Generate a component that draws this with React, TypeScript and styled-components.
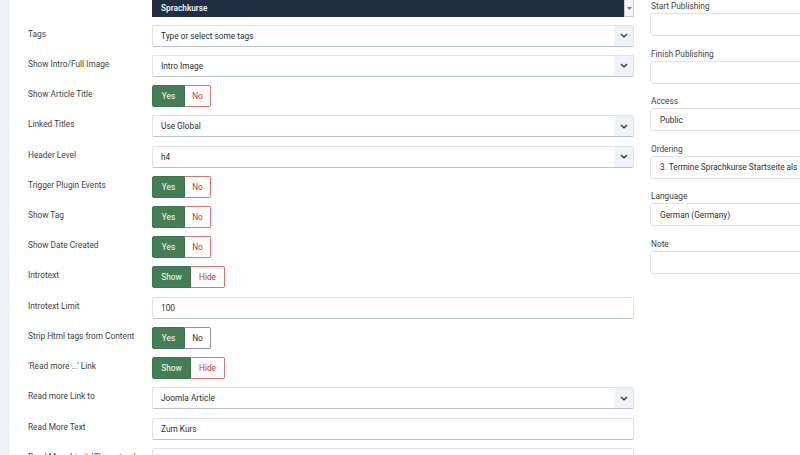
import React from 'react';
import styled, { createGlobalStyle } from 'styled-components';

const GlobalStyle = createGlobalStyle`
  html, body {
    margin: 0;
    padding: 0;
    background: #fff;
    overflow: hidden;
  }
  body {
    font-family: Roboto, "Liberation Sans", sans-serif;
    font-size: 8.3px;
    color: #3a3f45;
  }
`;

type Field =
  | { kind: 'select'; label: string; value: string }
  | { kind: 'input'; label: string; value: string }
  | { kind: 'toggle'; label: string; on: string; off: string; neutral?: boolean };

const fields: Field[] = [
  { kind: 'select', label: 'Tags', value: 'Type or select some tags' },
  { kind: 'select', label: 'Show Intro/Full Image', value: 'Intro Image' },
  { kind: 'toggle', label: 'Show Article Title', on: 'Yes', off: 'No' },
  { kind: 'select', label: 'Linked Titles', value: 'Use Global' },
  { kind: 'select', label: 'Header Level', value: 'h4' },
  { kind: 'toggle', label: 'Trigger Plugin Events', on: 'Yes', off: 'No' },
  { kind: 'toggle', label: 'Show Tag', on: 'Yes', off: 'No' },
  { kind: 'toggle', label: 'Show Date Created', on: 'Yes', off: 'No' },
  { kind: 'toggle', label: 'Introtext', on: 'Show', off: 'Hide' },
  { kind: 'input', label: 'Introtext Limit', value: '100' },
  { kind: 'toggle', label: 'Strip Html tags from Content', on: 'Yes', off: 'No', neutral: true },
  { kind: 'toggle', label: "'Read more ...' Link", on: 'Show', off: 'Hide' },
  { kind: 'select', label: 'Read more Link to', value: 'Joomla Article' },
  { kind: 'input', label: 'Read More Text', value: 'Zum Kurs' },
  { kind: 'input', label: 'Read More Limit (Characters)', value: '' },
];

const sideFields = [
  { label: 'Start Publishing', value: '' },
  { label: 'Finish Publishing', value: '' },
  { label: 'Access', value: 'Public' },
  { label: 'Ordering', value: '3. Termine Sprachkurse Startseite als Kacheln' },
  { label: 'Language', value: 'German (Germany)' },
  { label: 'Note', value: '' },
];

const Chevron = () => (
  <svg width="8" height="5" viewBox="0 0 8 5">
    <polyline points="1,1 4,4 7,1" fill="none" stroke="#22262a" strokeWidth="1.1" />
  </svg>
);

export default function App() {
  return (
    <>
      <GlobalStyle />
      <Page>
        <SideStrip />
        <Main>
          <FormColumn>
            <Row>
              <Label />
              <CategoryWrap>
                <CategoryBar>Sprachkurse</CategoryBar>
                <ScrollNub>
                  <svg width="5" height="3" viewBox="0 0 5 3">
                    <polygon points="0,0 5,0 2.5,3" fill="#777" />
                  </svg>
                </ScrollNub>
              </CategoryWrap>
            </Row>
            {fields.map((f) => (
              <Row key={f.label}>
                <Label>{f.label}</Label>
                {f.kind === 'select' && (
                  <SelectBox>
                    <Value>{f.value}</Value>
                    <Caret>
                      <Chevron />
                    </Caret>
                  </SelectBox>
                )}
                {f.kind === 'input' && (
                  <InputBox>
                    <Value>{f.value}</Value>
                  </InputBox>
                )}
                {f.kind === 'toggle' && (
                  <ToggleGroup>
                    <ToggleOn $wide={f.on === 'Show'}>{f.on}</ToggleOn>
                    <ToggleOff $wide={f.on === 'Show'} $neutral={!!f.neutral}>
                      {f.off}
                    </ToggleOff>
                  </ToggleGroup>
                )}
              </Row>
            ))}
          </FormColumn>
          <SideColumn>
            {sideFields.map((s) => (
              <SideGroup key={s.label}>
                <SideLabel>{s.label}</SideLabel>
                <SideInput>{s.value}</SideInput>
              </SideGroup>
            ))}
          </SideColumn>
        </Main>
      </Page>
    </>
  );
}

const Page = styled.div`
  display: flex;
  width: 800px;
  height: 455px;
  overflow: hidden;
`;

const SideStrip = styled.div`
  width: 10px;
  flex-shrink: 0;
  background: #eef1f6;
`;

const Main = styled.div`
  display: flex;
  padding-left: 18px;
  gap: 16px;
  margin-top: -5.5px;
`;

const FormColumn = styled.div`
  display: flex;
  flex-direction: column;
  width: 606px;
  flex-shrink: 0;
`;

const Row = styled.div`
  display: grid;
  grid-template-columns: 124px 482px;
  height: 22px;
  margin-bottom: 8.22px;
  flex-shrink: 0;
`;

const Label = styled.div`
  padding-top: 3px;
  line-height: 12px;
  color: #3a3f45;
  white-space: nowrap;
`;

const CategoryWrap = styled.div`
  display: flex;
  align-items: stretch;
`;

const CategoryBar = styled.div`
  flex: 1;
  background: #1f2d45;
  color: #fff;
  font-weight: 500;
  padding: 7px 0 0 9px;
  line-height: 12px;
`;

const ScrollNub = styled.div`
  width: 8px;
  border: 1px solid #c8ccd2;
  background: #f4f5f7;
  display: flex;
  align-items: flex-end;
  justify-content: center;
  padding-bottom: 6px;
`;

const BaseBox = styled.div`
  box-sizing: border-box;
  height: 22px;
  display: flex;
  align-items: center;
  background: #fff;
  border: 1px solid #dfe4ea;
  border-bottom-color: #b9c5d4;
  border-radius: 2px;
  overflow: hidden;
`;

const SelectBox = styled(BaseBox)``;

const InputBox = styled(BaseBox)``;

const Value = styled.span`
  flex: 1;
  padding-left: 8px;
  color: #2a2e33;
  white-space: nowrap;
`;

const Caret = styled.div`
  width: 19px;
  height: 100%;
  background: #eef2f9;
  display: flex;
  align-items: center;
  justify-content: center;
`;

const ToggleGroup = styled.div`
  display: flex;
  height: 22px;
`;

const ToggleOn = styled.div<{ $wide: boolean }>`
  box-sizing: border-box;
  width: ${(p) => (p.$wide ? 39 : 33)}px;
  background: #457d54;
  color: #fff;
  display: flex;
  align-items: center;
  justify-content: center;
  border-radius: 2px 0 0 2px;
  border: 1px solid #3f7450;
`;

const ToggleOff = styled.div<{ $wide: boolean; $neutral: boolean }>`
  box-sizing: border-box;
  width: ${(p) => (p.$wide ? 34 : 26)}px;
  background: #fff;
  color: ${(p) => (p.$neutral ? '#2b3035' : '#c4302e')};
  border: 1px solid ${(p) => (p.$neutral ? '#8d9196' : '#d8706c')};
  border-left: none;
  display: flex;
  align-items: center;
  justify-content: center;
  border-radius: 0 2px 2px 0;
`;

const SideColumn = styled.div`
  display: flex;
  flex-direction: column;
  padding-top: 5.5px;
  width: 170px;
  flex-shrink: 0;
`;

const SideGroup = styled.div`
  display: flex;
  flex-direction: column;
  margin-bottom: 11.6px;
`;

const SideLabel = styled.div`
  line-height: 12px;
  margin-bottom: 1px;
  color: #3a3f45;
  white-space: nowrap;
  margin-left: 1px;
`;

const SideInput = styled.div`
  box-sizing: border-box;
  height: 23px;
  border: 1px solid #dde2e9;
  border-radius: 3px;
  padding-left: 9px;
  display: flex;
  align-items: center;
  color: #2a2e33;
  white-space: nowrap;
  overflow: hidden;
`;
